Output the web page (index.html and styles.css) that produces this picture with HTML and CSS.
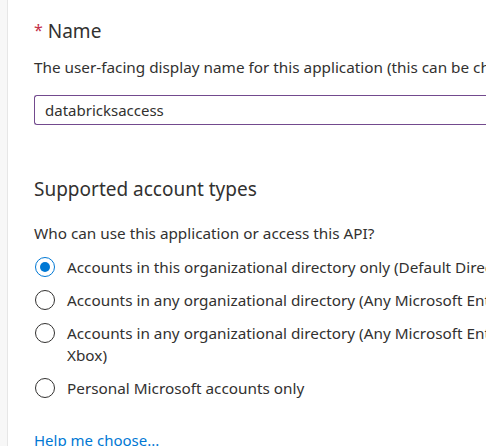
FILE: index.html
```html
<!DOCTYPE html>
<html>
<head>
<meta charset="utf-8">
<link rel="stylesheet" href="styles.css">
</head>
<body>
<div class="page">
  <div class="rail"></div>
  <div class="content">
    <h2 class="heading first"><span class="req">*</span> Name</h2>
    <p class="desc">The user-facing display name for this application (this can be changed later).</p>
    <div class="input">databricksaccess</div>

    <h2 class="heading second">Supported account types</h2>
    <p class="desc desc-second">Who can use this application or access this API?</p>
    <div class="radios">
      <div class="radio">
        <span class="circle checked"></span>
        <span class="label">Accounts in this organizational directory only (Default Directory only - Single tenant)</span>
      </div>
      <div class="radio">
        <span class="circle"></span>
        <span class="label">Accounts in any organizational directory (Any Microsoft Entra ID tenant - Multitenant)</span>
      </div>
      <div class="radio">
        <span class="circle"></span>
        <span class="label">Accounts in any organizational directory (Any Microsoft Entra ID tenant - Multitenant) and personal Microsoft accounts (e.g. Skype,<br>Xbox)</span>
      </div>
      <div class="radio">
        <span class="circle"></span>
        <span class="label">Personal Microsoft accounts only</span>
      </div>
    </div>
    <a class="link" href="#">Help me choose...</a>
  </div>
</div>
</body>
</html>
```
FILE: styles.css
```css
html, body {
  margin: 0;
  padding: 0;
  background: #ffffff;
  overflow: hidden;
}
body {
  font-family: "Segoe UI", "Noto Sans", "Open Sans", sans-serif;
  color: #323130;
  width: 486px;
  height: 446px;
}
.page {
  display: flex;
  height: 446px;
  overflow: hidden;
}
.rail {
  width: 7px;
  flex: none;
  background: #f7f7f7;
  border-right: 1px solid #e6e6e6;
}
.content {
  padding-left: 26px;
  flex: 1;
  min-width: 0;
  overflow: hidden;
  white-space: nowrap;
}
.heading {
  margin: 0;
  font-size: 19px;
  font-weight: 400;
  line-height: 28px;
}
.heading.first {
  margin-top: 17px;
}
.heading.second {
  margin-top: 50px;
}
.req {
  color: #c4314b;
  font-size: 16px;
  position: relative;
  top: -2px;
}
.desc {
  margin: 10px 0 0 0;
  font-size: 15.3px;
  line-height: 22px;
}
.desc-second {
  margin-top: 19px;
}
.input {
  margin-top: 17px;
  height: 28px;
  border: 1px solid #734a8e;
  border-right: none;
  border-radius: 3px 0 0 3px;
  padding-left: 10px;
  font-size: 15px;
  line-height: 28px;
}
.radios {
  margin-top: 12px;
  display: flex;
  flex-direction: column;
  gap: 11px;
}
.radio {
  display: flex;
  align-items: flex-start;
  gap: 12px;
  padding-left: 1px;
}
.circle {
  flex: none;
  width: 20px;
  height: 20px;
  box-sizing: border-box;
  border: 1px solid #323130;
  border-radius: 50%;
  margin-top: 1px;
  position: relative;
}
.circle.checked {
  border-color: #0078d4;
}
.circle.checked::after {
  content: "";
  position: absolute;
  left: 4px;
  top: 4px;
  width: 10px;
  height: 10px;
  border-radius: 50%;
  background: #0078d4;
}
.label {
  font-size: 15.3px;
  line-height: 22px;
}
.link {
  display: block;
  margin-top: 30px;
  font-size: 15px;
  line-height: 22px;
  color: #0078d4;
  text-decoration: underline;
}
```
